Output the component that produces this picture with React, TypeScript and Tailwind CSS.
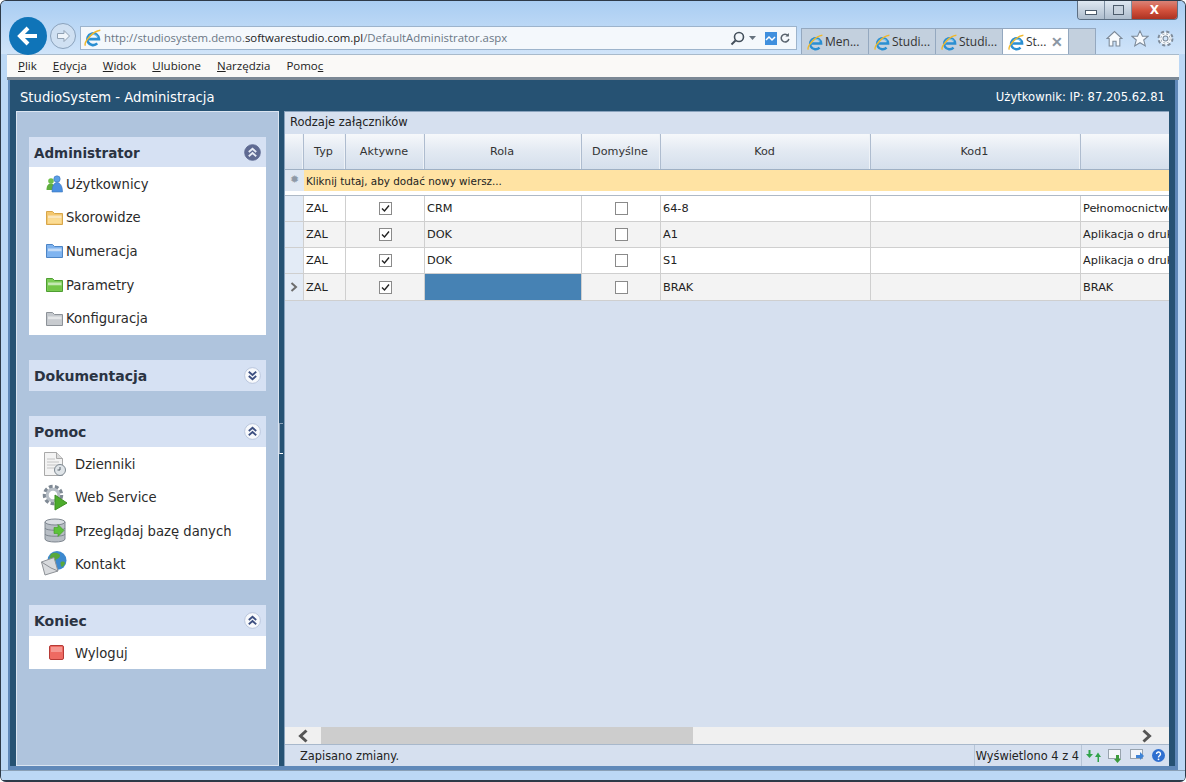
import React from "react";

function IeIcon({ size = 16 }: { size?: number }) {
  return (
    <svg width={size} height={size} viewBox="0 0 16 16" className="shrink-0">
      <path d="M4 9h9.300A5.200 5.200 0 1 0 11.800 12.800" fill="none" stroke="#2b8fd2" strokeWidth="2.300" />
      <path d="M4.200 8.800A4.200 4.200 0 0 1 12 7" fill="none" stroke="#7cc8ee" strokeWidth="1" />
      <path d="M1.300 14.800C-.5 12 7.500 2 14.500 1.200" fill="none" stroke="#f0b82c" strokeWidth="1.300" />
    </svg>
  );
}

function Tab({ label, active }: { label: string; active?: boolean }) {
  return (
    <div className={`flex items-center gap-[1px] h-[26px] pl-[5px] border-r border-[#94a8bf] text-[12px] text-[#333] ${active ? "w-[66px] bg-white" : "w-[67px] bg-[#c3d0de]"}`}>
      <IeIcon size={17} />
      <span className="whitespace-nowrap">{label}</span>
      {active && <span className="ml-[4px] text-[#8b96a3] text-[14px] font-bold leading-none">✕</span>}
    </div>
  );
}

function Collapse({ dir, dark }: { dir: "up" | "down"; dark?: boolean }) {
  const col = dark ? "#e6ebf5" : "#3d4f80";
  const paths = dir === "up" ? ["M4.500 7.500 8 4.500l3.500 3", "M4.500 11.500 8 8.500l3.500 3"] : ["M4.500 4.500 8 7.500l3.500-3", "M4.500 8.500 8 11.500l3.500-3"];
  return (
    <svg width="17" height="17" viewBox="0 0 16 16">
      <circle cx="8" cy="8" r="7.400" fill={dark ? "#5f6a92" : "#f7f9fc"} stroke={dark ? "#5f6a92" : "#b4c1d8"} strokeWidth=".8" />
      {paths.map((d) => (
        <path key={d} d={d} fill="none" stroke={col} strokeWidth="1.700" />
      ))}
    </svg>
  );
}

function Folder({ back, front, edge }: { back: string; front: string; edge: string }) {
  return (
    <svg width="17" height="15" viewBox="0 0 17 15">
      <path d="M.5 14.500V1.500h6l2 2h8v11z" fill={back} stroke={edge} />
      <rect x="2" y="5.500" width="13.500" height="3" fill="#fff" opacity=".55" />
      <rect x="2" y="8.500" width="13.500" height="5" fill={front} />
    </svg>
  );
}

function Users() {
  return (
    <svg width="17" height="18" viewBox="0 0 17 18">
      <circle cx="5" cy="6" r="2.800" fill="#6fbf4a" />
      <path d="M.5 15c0-5 2-6.500 4.500-6.500S9 11 9 15z" fill="#5fae3e" />
      <circle cx="11" cy="4" r="3.200" fill="#5b9fe6" stroke="#3a76bd" strokeWidth=".6" />
      <path d="M6 17c0-7 2.500-9.500 5-9.500S16.500 10 16.500 17z" fill="#4b90e0" stroke="#3a76bd" strokeWidth=".6" />
    </svg>
  );
}

function LogIcon() {
  return (
    <svg width="24" height="26" viewBox="0 0 24 26">
      <path d="M1.500 1.500h12l6 6V24.500H1.500z" fill="#f3f3f3" stroke="#a9a9a9" />
      <path d="M13.500 1.500v6h6" fill="#dcdcdc" stroke="#a9a9a9" />
      <path d="M4 8h8M4 11h12M4 14h12M4 17h8" stroke="#c4c4c4" />
      <circle cx="17" cy="19" r="5.500" fill="#dfe4e8" stroke="#7d8790" />
      <path d="M17 16v3h-2.500" stroke="#59636c" fill="none" />
    </svg>
  );
}

function GearPlay() {
  return (
    <svg width="26" height="28" viewBox="0 0 26 28">
      <circle cx="11" cy="12" r="8" fill="none" stroke="#7f8994" strokeWidth="4.500" strokeDasharray="3.500 2.100" />
      <circle cx="11" cy="12" r="5.800" fill="none" stroke="#b7bec6" strokeWidth="3" />
      <path d="M13 12v15l12-7z" fill="#4dac2c" stroke="#3d8e22" />
    </svg>
  );
}

function Db() {
  return (
    <svg width="22" height="25" viewBox="0 0 22 25">
      <path d="M1 4v17c0 4 20 4 20 0V4z" fill="#b8bec5" stroke="#7f8790" />
      <ellipse cx="11" cy="4" rx="10" ry="3" fill="#d9dde2" stroke="#7f8790" />
      <path d="M1 10c0 3 20 3 20 0M1 16c0 3 20 3 20 0" fill="none" stroke="#7f8790" />
      <path d="M10 9.500h4v-3l6 6-6 6v-3h-4z" fill="#5cc23a" stroke="#3f9b22" strokeWidth=".6" />
    </svg>
  );
}

function Mail() {
  return (
    <svg width="27" height="26" viewBox="0 0 27 26">
      <circle cx="16" cy="10.500" r="9.500" fill="#3d89cf" />
      <path d="M10 4c3-2 6-1 8 0s1 4-2 5-1 5-4 5-2-4-3-5 0-3 1-5zM20 12c2-1 4 0 4 1s-2 4-3 4-2-4-1-5z" fill="#58a83c" />
      <path d="M.5 12 13 7.500 17 21 4 25z" fill="#d8dadd" stroke="#8d9196" />
      <path d="M.5 12 10 18l7 3" fill="none" stroke="#8d9196" />
    </svg>
  );
}

function Stop() {
  return (
    <svg width="15" height="15" viewBox="0 0 15 15" className="ml-[3px]">
      <rect x=".5" y=".5" width="14" height="14" rx="1.500" fill="#ee6a62" stroke="#b63a36" />
      <rect x="2" y="2" width="11" height="5" fill="#f59791" />
    </svg>
  );
}

function SideItem({ icon, label, wide }: { icon: React.ReactNode; label: string; wide?: boolean }) {
  return (
    <div className={`flex items-center ${wide ? "h-[33.25px]" : "h-[33.6px]"}`}>
      <div className={`flex justify-center shrink-0 ${wide ? "w-[46px] pl-[5px]" : "w-[37px] pl-[13px]"}`}>{icon}</div>
      <span className={`text-[13.200px] text-[#2b2b2b] whitespace-nowrap ${wide ? "mt-[3px]" : "mt-[2px]"}`}>{label}</span>
    </div>
  );
}

function Section({ title, dir, dark, children, mt, big }: { title: string; dir: "up" | "down"; dark?: boolean; children?: React.ReactNode; mt: string; big?: boolean }) {
  return (
    <div className={mt}>
      <div className={`flex items-center justify-between bg-[#d6e1f3] pl-[5px] pr-[5px] ${big ? "h-[31px]" : "h-[30px]"}`}>
        <span className={`mt-[2px] font-bold text-[#2a3342] ${big ? "text-[14px]" : "text-[13.500px]"}`}>{title}</span>
        <Collapse dir={dir} dark={dark} />
      </div>
      {children && <div className="bg-white">{children}</div>}
    </div>
  );
}

function Check({ on }: { on?: boolean }) {
  return (
    <span className="flex items-center justify-center w-[13px] h-[13px] border border-[#8a8a8a] bg-white">
      {on && (
        <svg width="9" height="9" viewBox="0 0 9 9">
          <path d="M1 4.500 3.500 7 8 1.500" fill="none" stroke="#222" strokeWidth="1.400" />
        </svg>
      )}
    </span>
  );
}

const cols = ["w-[42px]", "w-[79px]", "w-[157px]", "w-[79px]", "w-[210px]", "w-[210px]"];

function HeadCell({ w, label }: { w: string; label?: string }) {
  return (
    <div className={`${w} shrink-0 flex items-center justify-center h-full pt-[2px] pr-[2px] border-r border-[#aebccf] shadow-[inset_-1px_0_0_#eef2f7] bg-gradient-to-b from-[#f6f8fb] via-[#e2e9f2] to-[#d5dfec] text-[11.200px] text-[#333]`}>
      {label}
    </div>
  );
}

type Row = { role: string; kod: string; name: string; sel?: boolean };
const rows: Row[] = [
  { role: "CRM", kod: "64-8", name: "Pełnomocnictwo" },
  { role: "DOK", kod: "A1", name: "Aplikacja o druk" },
  { role: "DOK", kod: "S1", name: "Aplikacja o druk" },
  { role: "", kod: "BRAK", name: "BRAK", sel: true },
];

function Cell({ w, children, center, bg }: { w: string; children?: React.ReactNode; center?: boolean; bg?: string }) {
  return (
    <div className={`${w} shrink-0 flex items-center h-full border-r border-[#cfcfcf] overflow-hidden whitespace-nowrap ${center ? "justify-center" : "pl-[2px] pt-[2px]"} ${bg ?? ""}`}>
      {children}
    </div>
  );
}

function DataRow({ r, i }: { r: Row; i: number }) {
  return (
    <div className={`flex box-content border-b border-[#cfcfcf] text-[11.300px] text-[#222] ${i === 3 ? "h-[26px]" : "h-[25px]"} ${i % 2 ? "bg-[#f3f3f3]" : "bg-white"}`}>
      <div className="w-[19px] shrink-0 flex items-center justify-center border-r border-[#cfcfcf] bg-[#e3ebf6]">
        {r.sel && (
          <svg width="8" height="10" viewBox="0 0 8 10">
            <path d="M1.500 1 6 5 1.500 9" fill="none" stroke="#6d6d6d" strokeWidth="2" />
          </svg>
        )}
      </div>
      <Cell w={cols[0]}>ZAL</Cell>
      <Cell w={cols[1]} center><Check on /></Cell>
      <Cell w={cols[2]} bg={r.sel ? "bg-[#4682b4]" : ""}>{r.role}</Cell>
      <Cell w={cols[3]} center><Check /></Cell>
      <Cell w={cols[4]}>{r.kod}</Cell>
      <Cell w={cols[5]} />
      <div className="flex-1 min-w-0 flex items-center pl-[2px] pt-[2px] overflow-hidden whitespace-nowrap">{r.name}</div>
    </div>
  );
}

export default function App() {
  return (
    <div className="font-[DejaVu_Sans,sans-serif] relative w-[1186px] h-[782px] overflow-hidden flex flex-col bg-[#bcd8f5] border border-b-0 border-[#2d3a48] rounded-t-[6px] rounded-b-[6px]">
      {/* Window buttons */}
      <div className="absolute top-0 right-[7px] flex h-[19px] w-[101px] rounded-b-[4px] border border-t-0 border-[#5d6f83] overflow-hidden">
        <div className="w-[27px] bg-gradient-to-b from-[#dfe8f2] to-[#aebdcd] border-r border-[#7c8da0] flex items-center justify-center">
          <span className="block w-[12px] h-[5px] mt-[5px] border border-[#4d5c6c] bg-white" />
        </div>
        <div className="w-[27px] bg-gradient-to-b from-[#dfe8f2] to-[#aebdcd] border-r border-[#7c8da0] flex items-center justify-center">
          <span className="block w-[11px] h-[10px] border border-[#4d5c6c] bg-[#c7d2de]" />
        </div>
        <div className="flex-1 bg-gradient-to-b from-[#d98377] via-[#d4523d] to-[#ad3222] flex items-center justify-center text-white text-[12px] font-bold leading-none">X</div>
      </div>

      {/* Navigation row */}
      <div className="h-[53px] shrink-0 bg-gradient-to-b from-[#a9cdf2] to-[#d0e4f9] flex items-end pl-[8px] font-[Open_Sans,sans-serif]">
        <div className="flex items-center relative z-10 -mb-[1px]">
          <div className="w-[38px] h-[38px] rounded-full bg-[#0f74b8] flex items-center justify-center">
            <svg width="22" height="20" viewBox="0 0 22 20">
              <path d="M11 2 3 10l8 8M3 10h17" fill="none" stroke="#fff" strokeWidth="4" />
            </svg>
          </div>
          <div className="ml-[3px] w-[26px] h-[26px] rounded-full border border-[#8aa2bc] bg-[#cfe0f2] flex items-center justify-center">
            <svg width="15" height="14" viewBox="0 0 15 14">
              <path d="M8 1.500 13.500 7 8 12.500V9.500H1.500v-5H8z" fill="#eef4fa" stroke="#8fa0b3" />
            </svg>
          </div>
        </div>
        <div className="ml-[4px] mb-[4px] w-[717px] h-[24px] flex items-center bg-[#f4f8fc] border border-[#9db4cc] pl-[3px] pr-[6px] text-[11.400px]">
          <IeIcon size={18} />
          <span className="ml-[2px] text-[#6b7785] whitespace-nowrap">
            http://studiosystem.demo.<span className="text-[#1c1c1c]">softwarestudio.com.pl</span>/DefaultAdministrator.aspx
          </span>
          <div className="ml-auto flex items-center">
            <svg width="15" height="15" viewBox="0 0 15 15">
              <circle cx="9" cy="6" r="4.500" fill="none" stroke="#44505c" strokeWidth="1.600" />
              <path d="M5.500 9.500 1.500 13.500" stroke="#44505c" strokeWidth="2" />
            </svg>
            <svg width="7" height="4" viewBox="0 0 7 4" className="ml-[4px]">
              <path d="M0 0h7L3.500 4z" fill="#66727e" />
            </svg>
            <svg width="12" height="13" viewBox="0 0 12 13" className="ml-[9px]">
              <rect width="12" height="13" fill="#3f8fde" />
              <path d="M1 8l3-3 3 3 3-3" fill="none" stroke="#fff" strokeWidth="1.500" />
            </svg>
            <svg width="10" height="12" viewBox="0 0 13 14" className="ml-[3px]">
              <path d="M10.500 4A5 5 0 1 0 11.500 8" fill="none" stroke="#59636e" strokeWidth="2" />
              <path d="M11.500 .5v4.500H7z" fill="#59636e" />
            </svg>
          </div>
        </div>
        <div className="ml-[4px] flex h-[26px] border-l border-t border-[#94a8bf]">
          <Tab label="Men..." />
          <Tab label="Studi..." />
          <Tab label="Studi..." />
          <Tab label="St..." active />
          <div className="w-[27px] bg-[#c3d0de] border-r border-[#94a8bf]" />
        </div>
        <div className="ml-[10px] mb-[4px] flex items-center gap-[8px] h-[24px]">
          <svg width="17" height="17" viewBox="0 0 16 16">
            <path d="M1 8 8 1.500 15 8h-2v7H9.500v-4.500h-3V15H3V8z" fill="#f7fafd" stroke="#7d8a99" />
          </svg>
          <svg width="18" height="17" viewBox="0 0 17 16">
            <path d="m8.500.8 2.300 5h5.400l-4.200 3.600 1.500 5.600-5-3-5 3 1.500-5.600L.8 5.800h5.400z" fill="#f7fafd" stroke="#7d8a99" />
          </svg>
          <svg width="17" height="17" viewBox="0 0 16 16">
            <circle cx="8" cy="8" r="5.800" fill="#f7fafd" stroke="#7d8a99" strokeWidth="3.400" strokeDasharray="2.600 1.950" />
            <circle cx="8" cy="8" r="5.200" fill="none" stroke="#f7fafd" />
            <circle cx="8" cy="8" r="2.300" fill="#d0e4f9" stroke="#7d8a99" />
          </svg>
        </div>
      </div>

      {/* Menu bar */}
      <div className="mx-[6px] h-[23px] shrink-0 bg-[#faf9f7] border-t border-[#a8bacb] flex items-center pl-[11px] gap-[16px] text-[11.500px] text-[#222] font-[Open_Sans,sans-serif]">
        <span><u>P</u>lik</span>
        <span><u>E</u>dycja</span>
        <span><u>W</u>idok</span>
        <span><u>U</u>lubione</span>
        <span><u>N</u>arzędzia</span>
        <span>Pomo<u>c</u></span>
      </div>
      <div className="mx-[6px] h-[3px] shrink-0 bg-[#7b8895]" />

      {/* App frame */}
      <div className="ml-[7px] mr-[7px] flex-1 min-h-0 bg-[#265273] border-l-[2px] border-r-[3px] border-[#6089b9] flex flex-col">
        <div className="h-[31px] shrink-0 flex items-center justify-between pl-[10px] pr-[10px] pt-[4px] text-white">
          <span className="text-[13.200px]">StudioSystem - Administracja</span>
          <span className="text-[11.600px]">Użytkownik: IP: 87.205.62.81</span>
        </div>
        <div className="flex-1 min-h-0 flex pl-[6px] pr-[6px] relative">
          {/* Sidebar */}
          <div className="w-[263px] shrink-0 bg-[#afc4dd] border border-[#dbe5f1] px-[12px] pt-[25px]">
            <Section title="Administrator" dir="up" dark mt="">
              <SideItem icon={<Users />} label="Użytkownicy" />
              <SideItem icon={<Folder back="#f4c76e" front="#fbdc93" edge="#d7a64a" />} label="Skorowidze" />
              <SideItem icon={<Folder back="#7eb2ee" front="#7fb4f0" edge="#4d85c6" />} label="Numeracja" />
              <SideItem icon={<Folder back="#7ccc56" front="#74c648" edge="#4f9e32" />} label="Parametry" />
              <SideItem icon={<Folder back="#c4c8cd" front="#c8cbcf" edge="#8d9298" />} label="Konfiguracja" />
            </Section>
            <Section big title="Dokumentacja" dir="down" mt="mt-[25px]" />
            <Section big title="Pomoc" dir="up" mt="mt-[25px]">
              <SideItem wide icon={<LogIcon />} label="Dzienniki" />
              <SideItem wide icon={<GearPlay />} label="Web Service" />
              <SideItem wide icon={<Db />} label="Przeglądaj bazę danych" />
              <SideItem wide icon={<Mail />} label="Kontakt" />
            </Section>
            <Section big title="Koniec" dir="up" mt="mt-[25px]">
              <SideItem wide icon={<Stop />} label="Wyloguj" />
            </Section>
          </div>

          {/* Splitter handle */}
          <div className="absolute left-[269px] top-[312px] w-[4px] h-[31px] border border-r-0 border-t-[#8fa3b8] border-l-[#8fa3b8] border-b-white" />

          {/* Main */}
          <div className="ml-[5px] flex-1 min-w-0 bg-[#d6e0ef] border-t border-l border-[#8aa3bd] flex flex-col">
            <div className="h-[22px] shrink-0 flex items-center pl-[5px] text-[11.500px] text-[#222]">Rodzaje załączników</div>
            <div className="flex h-[36px] shrink-0 border-b border-[#9fb0c4]">
              <HeadCell w="w-[19px]" />
              <HeadCell w={cols[0]} label="Typ" />
              <HeadCell w={cols[1]} label="Aktywne" />
              <HeadCell w={cols[2]} label="Rola" />
              <HeadCell w={cols[3]} label="Domyślne" />
              <HeadCell w={cols[4]} label="Kod" />
              <HeadCell w={cols[5]} label="Kod1" />
              <div className="flex-1 bg-gradient-to-b from-[#f6f8fb] via-[#e2e9f2] to-[#d5dfec]" />
            </div>
            <div className="flex h-[21px] shrink-0 bg-[#ffe3a3] text-[10.400px] text-[#222]">
              <div className="w-[19px] shrink-0 flex items-center justify-center bg-[#dfe7f2] text-[#8d98a6] text-[11px]">✹</div>
              <div className="flex items-center pl-[2px] pt-[3px]">Kliknij tutaj, aby dodać nowy wiersz...</div>
            </div>
            <div className="h-[5px] shrink-0 bg-white border-b border-[#aeb9c6]" />
            <div className="shrink-0">
              {rows.map((r, i) => (
                <DataRow key={i} r={r} i={i} />
              ))}
            </div>
            <div className="flex-1" />
            {/* Scrollbar */}
            <div className="h-[17px] shrink-0 flex items-center bg-[#f0f0f0]">
              <div className="w-[36px] flex justify-center">
                <svg width="12" height="14" viewBox="0 0 12 14">
                  <path d="M9.500 1.500 3.500 7l6 5.500" fill="none" stroke="#555" strokeWidth="3" />
                </svg>
              </div>
              <div className="w-[372px] h-full bg-[#cdcdcd]" />
              <div className="flex-1" />
              <div className="w-[45px] flex justify-center">
                <svg width="12" height="14" viewBox="0 0 12 14">
                  <path d="M2.500 1.500 8.500 7l-6 5.500" fill="none" stroke="#555" strokeWidth="3" />
                </svg>
              </div>
            </div>
            {/* Status */}
            <div className="h-[22px] shrink-0 flex items-center border-t border-[#a8b8cb] text-[11.400px] text-[#222]">
              <span className="pl-[15px] pt-[2px]">Zapisano zmiany.</span>
              <div className="ml-auto h-full flex items-center">
                <span className="h-full flex items-center pl-[1px] pr-[2px] pt-[2px] border-l border-r border-[#b7c5d6] whitespace-nowrap">Wyświetlono 4 z 4</span>
                <div className="flex items-center gap-[7px] pl-[4px] pr-[4px]">
                  <svg width="15" height="14" viewBox="0 0 15 14">
                    <path d="M4.500 1v4h2.500L3.500 9 0 5h2.500V1zM11.500 13V8H9l3-4.500L15 8h-2v5z" fill="#31a34a" />
                  </svg>
                  <svg width="15" height="14" viewBox="0 0 15 14">
                    <rect x=".5" y=".5" width="12" height="9" fill="#f3f6fa" stroke="#98a3ae" />
                    <path d="M8 6h3v4h2l-3.500 4L6 10h2z" fill="#3c9b3c" />
                  </svg>
                  <svg width="15" height="14" viewBox="0 0 15 14">
                    <rect x=".5" y=".5" width="12" height="9" fill="#f3f6fa" stroke="#98a3ae" />
                    <path d="M6 6h4V3l4 4-4 4V9H6z" fill="#3e83d6" />
                  </svg>
                  <svg width="13" height="13" viewBox="0 0 13 13">
                    <circle cx="6.500" cy="6.500" r="6.500" fill="#2f6fd0" />
                    <path d="M4.500 5a2 2 0 1 1 3 1.700C6.800 7.200 6.500 7.500 6.500 8.500" fill="none" stroke="#fff" strokeWidth="1.400" />
                    <circle cx="6.500" cy="10.300" r=".9" fill="#fff" />
                  </svg>
                </div>
              </div>
            </div>
          </div>
        </div>
      </div>

      {/* Bottom window edge */}
      <div className="mx-[7px] h-[4px] shrink-0 bg-[#6089b9]" />
      <div className="h-[10px] shrink-0 mx-[0px] bg-[#bcd8f5] border-t border-[#8aa0b6]" />
      <div className="h-[2px] shrink-0 bg-[#2d3a48]" />
    </div>
  );
}
